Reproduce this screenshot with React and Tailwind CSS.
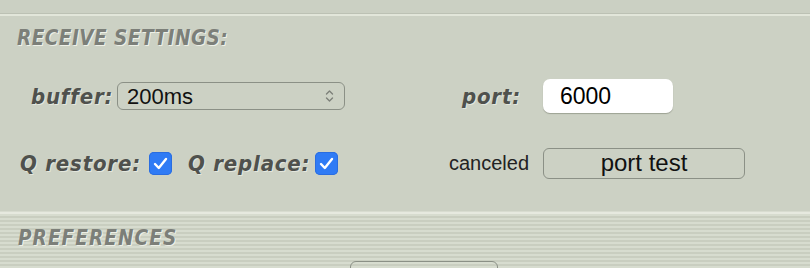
import React from 'react';

const heading = "font-['DejaVu_Sans_Condensed','DejaVu_Sans',sans-serif] font-bold italic text-[#7c7f79] [text-shadow:1px_1px_0_#eef0e7]";
const label = "font-['DejaVu_Sans_Condensed','DejaVu_Sans',sans-serif] font-bold italic text-[#4f514d] text-[22px] tracking-[0.8px] [text-shadow:1px_1px_0_#e4e7dd]";

const Check = () => (
   <span className="w-[23px] h-[23px] shrink-0 rounded-[5px] bg-[#2f7bf5] flex items-center justify-center shadow-[inset_0_0_0_1px_#2a6de0]">
      <svg width="15" height="13" viewBox="0 0 15 13" fill="none">
         <path d="M2 7l3.8 4L13 2" stroke="white" strokeWidth="2.4" strokeLinecap="round" strokeLinejoin="round" />
      </svg>
   </span>
);

const App = () => {
   return (
      <div className="w-[810px] h-[268px] overflow-hidden bg-[#cbd0c3] font-['Liberation_Sans',Arial,sans-serif] flex flex-col">
         <div className="h-[13px] shrink-0" />
         <div className="h-[1px] bg-[#bcc1b4] shrink-0" />
         <div className="h-[2px] bg-[#e2e6da] shrink-0" />

         <div className="h-[195px] shrink-0 bg-[#ccd1c4] flex flex-col">
            <div className={`${heading} text-[20.5px] leading-[22px] tracking-[0.5px] pl-[17px] mt-[11px]`}>RECEIVE SETTINGS:</div>

            {/* row 1 */}
            <div className="flex items-center mt-[30px] h-[34px]">
               <div className={`${label} pl-[31px] w-[117px] shrink-0 whitespace-nowrap`}>buffer:</div>
               <div className="w-[228px] h-[28px] shrink-0 rounded-[6px] border border-[#8b9086] flex items-center justify-between pl-[9px] pr-[10px] text-[22px] text-[#111]">
                  <span>200ms</span>
                  <svg width="9" height="14" viewBox="0 0 9 14" fill="none">
                     <path d="M1.5 5L4.5 2l3 3M1.5 9l3 3 3-3" stroke="#7d8079" strokeWidth="1.4" strokeLinecap="round" strokeLinejoin="round" />
                  </svg>
               </div>
               <div className={`${label} ml-[117px] w-[81px] shrink-0`}>port:</div>
               <div className="w-[130px] h-[34px] shrink-0 rounded-[7px] bg-white shadow-[0_1px_1px_#9da294] flex items-center pl-[17px] text-[23px] text-black">6000</div>
            </div>

            {/* row 2 */}
            <div className="flex items-center mt-[34px] h-[32px]">
               <div className={`${label} pl-[20px] w-[149px] shrink-0 whitespace-nowrap`}>Q restore:</div>
               <Check />
               <div className={`${label} ml-[16px] w-[127px] shrink-0 whitespace-nowrap`}>Q replace:</div>
               <Check />
               <div className="ml-[111px] w-[94px] shrink-0 text-[20px] text-[#222]">canceled</div>
               <button className="w-[202px] h-[31px] shrink-0 rounded-[6px] border border-[#8b9086] text-[24px] text-[#111] flex items-center justify-center">port test</button>
            </div>
         </div>

         <div className="h-[1px] bg-[#d8dcd0] shrink-0" />
         <div className="h-[2px] bg-[#e6e9df] shrink-0" />
         <div className="flex-1 bg-[repeating-linear-gradient(to_bottom,#d7dccf_0px,#d7dccf_2px,#c9cec0_2px,#c9cec0_4px)]">
            <div className={`${heading} text-[20.5px] leading-[22px] tracking-[1.1px] pl-[18px] mt-[13px]`}>PREFERENCES</div>
            <div className="ml-[350px] mt-[12px] w-[148px] h-[20px] rounded-[6px] border border-[#8b9086]" />
         </div>
      </div>
   );
};

export default App;
